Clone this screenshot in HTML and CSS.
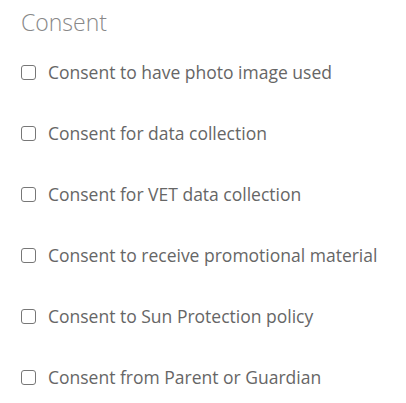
FILE: index.html
```html
<!DOCTYPE html>
<html>
<head>
<meta charset="utf-8">
<link rel="stylesheet" href="styles.css">
</head>
<body>
<section class="consent">
  <h2 class="consent-title">Consent</h2>
  <ul class="consent-list">
    <li class="consent-item"><span class="box"></span><span class="label">Consent to have photo image used</span></li>
    <li class="consent-item"><span class="box"></span><span class="label">Consent for data collection</span></li>
    <li class="consent-item"><span class="box"></span><span class="label">Consent for VET data collection</span></li>
    <li class="consent-item"><span class="box"></span><span class="label">Consent to receive promotional material</span></li>
    <li class="consent-item"><span class="box"></span><span class="label">Consent to Sun Protection policy</span></li>
    <li class="consent-item"><span class="box"></span><span class="label">Consent from Parent or Guardian</span></li>
  </ul>
</section>
</body>
</html>
```
FILE: styles.css
```css
html, body {
  margin: 0;
  padding: 0;
  background: #fff;
}
body {
  font-family: "Open Sans", "Liberation Sans", sans-serif;
  color: #666;
}
.consent {
  padding: 7px 0 0 21px;
}
.consent-title {
  margin: 0;
  font-size: 23px;
  font-weight: 300;
  line-height: 30px;
  color: #888;
}
.consent-list {
  list-style: none;
  margin: 0;
  padding: 0;
  display: flex;
  flex-direction: column;
  gap: 37px;
  margin-top: 23px;
}
.consent-item {
  display: flex;
  align-items: center;
  gap: 12px;
  height: 24px;
  font-size: 17.5px;
}
.box {
  box-sizing: border-box;
  width: 15px;
  height: 15px;
  border: 1.5px solid #777;
  border-radius: 3px;
  flex: none;
}
.label {
  line-height: 24px;
}
```
